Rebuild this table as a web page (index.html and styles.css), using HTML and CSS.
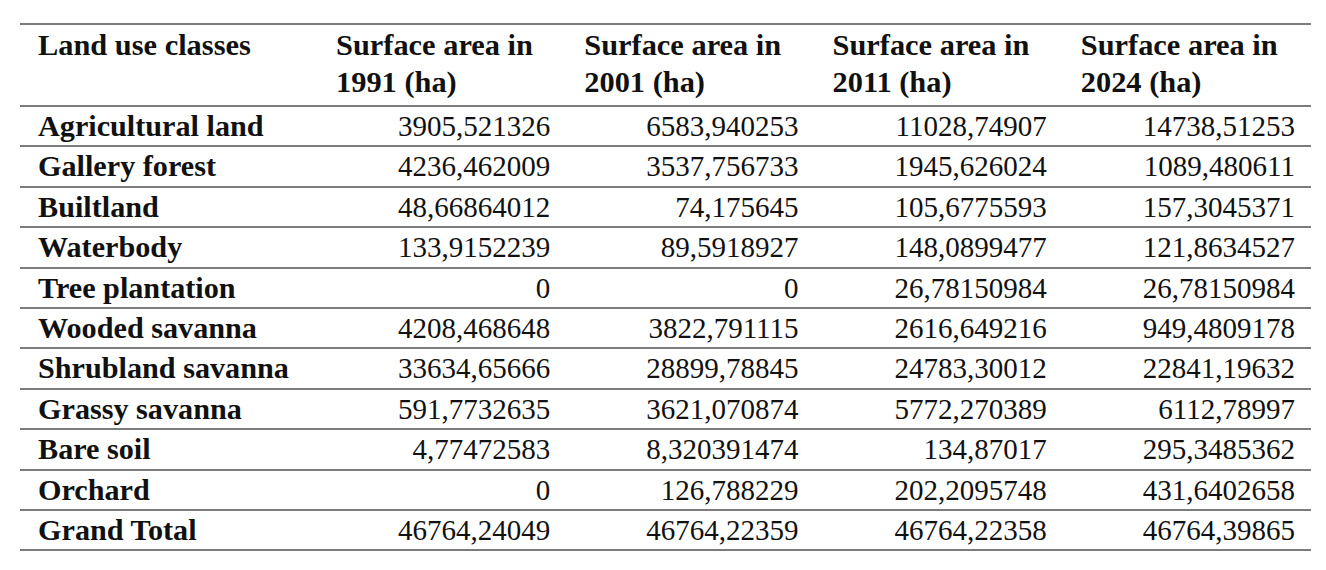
FILE: index.html
```html
<!DOCTYPE html>
<html lang="en">
<head>
<meta charset="UTF-8">
<title>Land use classes</title>
<link rel="stylesheet" href="styles.css">
</head>
<body>

<table class="landuse">
    <thead>
        <tr>
            <th class="name">Land use classes</th>
            <th>Surface area in<br>1991 (ha)</th>
            <th>Surface area in<br>2001 (ha)</th>
            <th>Surface area in<br>2011 (ha)</th>
            <th>Surface area in<br>2024 (ha)</th>
        </tr>
    </thead>
    <tbody>
        <tr><td class="name">Agricultural land</td><td>3905,521326</td><td>6583,940253</td><td>11028,74907</td><td>14738,51253</td></tr>
        <tr><td class="name">Gallery forest</td><td>4236,462009</td><td>3537,756733</td><td>1945,626024</td><td>1089,480611</td></tr>
        <tr><td class="name">Builtland</td><td>48,66864012</td><td>74,175645</td><td>105,6775593</td><td>157,3045371</td></tr>
        <tr><td class="name">Waterbody</td><td>133,9152239</td><td>89,5918927</td><td>148,0899477</td><td>121,8634527</td></tr>
        <tr><td class="name">Tree plantation</td><td>0</td><td>0</td><td>26,78150984</td><td>26,78150984</td></tr>
        <tr><td class="name">Wooded savanna</td><td>4208,468648</td><td>3822,791115</td><td>2616,649216</td><td>949,4809178</td></tr>
        <tr><td class="name">Shrubland savanna</td><td>33634,65666</td><td>28899,78845</td><td>24783,30012</td><td>22841,19632</td></tr>
        <tr><td class="name">Grassy savanna</td><td>591,7732635</td><td>3621,070874</td><td>5772,270389</td><td>6112,78997</td></tr>
        <tr><td class="name">Bare soil</td><td>4,77472583</td><td>8,320391474</td><td>134,87017</td><td>295,3485362</td></tr>
        <tr><td class="name">Orchard</td><td>0</td><td>126,788229</td><td>202,2095748</td><td>431,6402658</td></tr>
        <tr><td class="name">Grand Total</td><td>46764,24049</td><td>46764,22359</td><td>46764,22358</td><td>46764,39865</td></tr>
    </tbody>
</table>

</body>
</html>
```

FILE: styles.css
```css
body {
    margin: 0;
    padding: 23px 0 0 20px;
    background-color: #ffffff;
    color: #111111;
    font-family: "Liberation Serif", "DejaVu Serif", serif;
}
.landuse {
    width: 1291px;
    border-collapse: collapse;
    table-layout: fixed;
    font-size: 29px;
}
.landuse th,
.landuse td {
    padding: 0 16px 0 18px;
    border-bottom: 2px solid #7c7c7c;
}
.landuse thead th {
    border-top: 2px solid #7c7c7c;
    text-align: left;
    font-weight: bold;
    font-size: 30.4px;
    line-height: 37px;
    height: 78px;
    padding-top: 2px;
    vertical-align: top;
}
.landuse thead th.name {
    width: 298px;
    box-sizing: border-box;
}
.landuse td {
    text-align: right;
    line-height: 38.4px;
    white-space: nowrap;
}
.landuse td.name {
    text-align: left;
    font-weight: bold;
    font-size: 30.2px;
}
```
